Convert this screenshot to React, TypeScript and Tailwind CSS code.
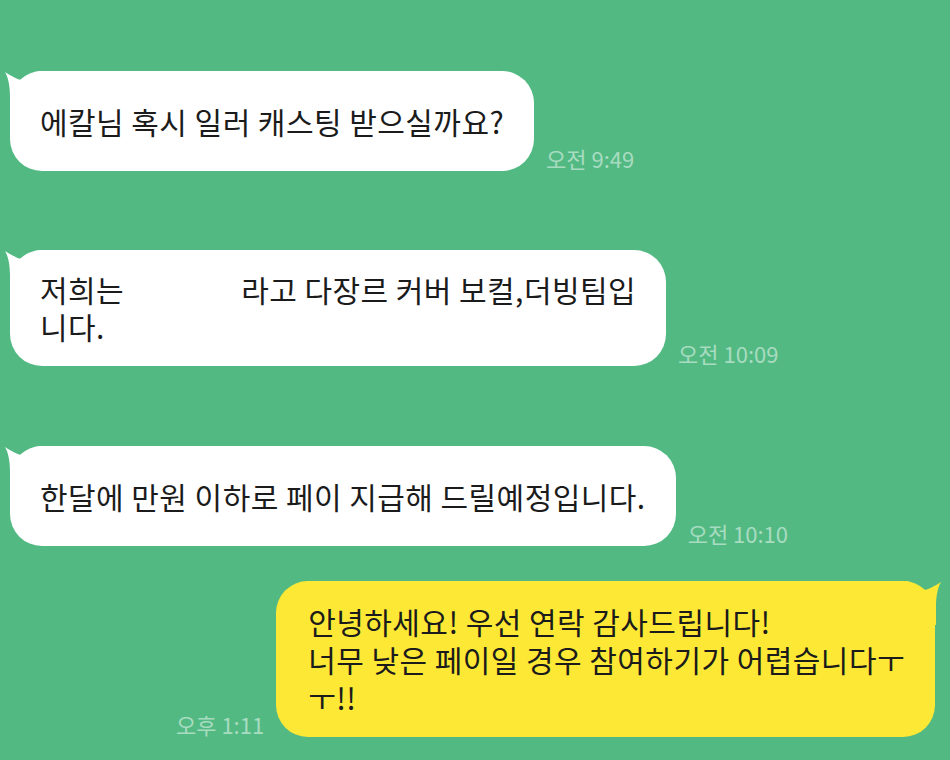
import React from 'react';

const FONT = "font-['Noto_Sans_CJK_KR','Noto_Sans',sans-serif]";

function LeftTail() {
  return (
    <svg className="absolute -left-[6px] top-0" width="44" height="44" viewBox="-6 0 44 44">
      <path d="M -5 1 C 3 6, 10 10, 14 9 C 20 7, 24 1, 30 0 L 38 0 L 38 44 L 0 44 L 0 26 C 0 14, -2 6, -5 1 Z" fill="#ffffff" />
    </svg>
  );
}

function RightTail() {
  return (
    <svg className="absolute -right-[7px] top-0" width="44" height="44" viewBox="0 0 44 44">
      <path d="M 43 1 C 35 6, 28 10, 24 9 C 18 7, 14 1, 8 0 L 0 0 L 0 44 L 38 44 L 38 26 C 38 14, 40 6, 43 1 Z" fill="#fde935" />
    </svg>
  );
}

function Time({ t }: { t: string }) {
  return <div className="mb-[1px] shrink-0 whitespace-nowrap text-[22px] leading-[24px] text-[#a8dcc0]">{t}</div>;
}

function Left({ lines, time }: { lines: React.ReactNode[]; time: string }) {
  return (
    <div className="flex items-end gap-3 pl-[10px]">
      <div className="relative flex min-h-[100px] items-center rounded-[32px] bg-white py-[21px] pl-[30px] pr-[30px]">
        <LeftTail />
        <div className="relative text-[30px] leading-[37px] tracking-[0.45px] text-[#1b1b1b]">
          {lines.map((l, i) => (
            <div key={i} className="whitespace-nowrap">{l}</div>
          ))}
        </div>
      </div>
      <Time t={time} />
    </div>
  );
}

export default function App() {
  return (
    <div className={`${FONT} flex h-[760px] w-[950px] flex-col overflow-hidden bg-[#52b983] pt-[71px]`}>
      <Left lines={['에칼님 혹시 일러 캐스팅 받으실까요?']} time="오전 9:49" />
      <div className="h-[79px]" />
      <Left
        lines={[
          <>
            저희는<span className="inline-block w-[117px]" />라고 다장르 커버 보컬,더빙팀입
          </>,
          '니다.',
        ]}
        time="오전 10:09"
      />
      <div className="h-[80px]" />
      <Left lines={['한달에 만원 이하로 페이 지급해 드릴예정입니다.']} time="오전 10:10" />
      <div className="h-[35px]" />
      <div className="flex items-end justify-end gap-3 pr-[15px]">
        <Time t="오후 1:11" />
        <div className="relative rounded-[32px] bg-[#fde935] py-[21px] pl-[32px] pr-[30px]">
          <RightTail />
          <div className="relative text-[30px] leading-[38px] tracking-[0.45px] text-[#1b1b1b]">
            <div className="whitespace-nowrap">안녕하세요! 우선 연락 감사드립니다!</div>
            <div className="whitespace-nowrap">너무 낮은 페이일 경우 참여하기가 어렵습니다ㅜ</div>
            <div className="whitespace-nowrap">ㅜ!!</div>
          </div>
        </div>
      </div>
    </div>
  );
}
